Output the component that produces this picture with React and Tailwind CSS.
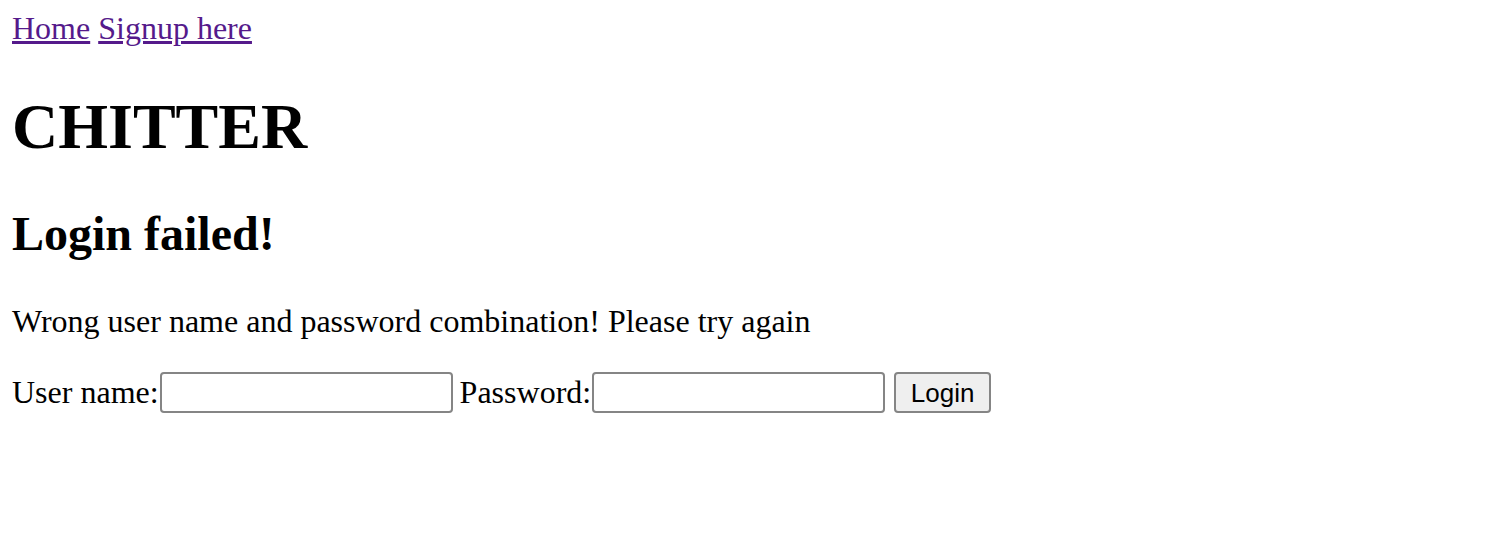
import React, { useState } from "react";

function App() {
  const [user, setUser] = useState("");
  const [password, setPassword] = useState("");

  return (
    <div className="mx-3 mt-[10px] font-['Liberation_Serif',serif] text-[32px] leading-[1.15] text-black">
      <div>
        <a href="#" className="text-[#551a8b] underline">
          Home
        </a>{" "}
        <a href="#" className="text-[#551a8b] underline">
          Signup here
        </a>
      </div>

      <h1 className="my-[43px] text-[64px] font-bold leading-[1.15]">CHITTER</h1>

      <h2 className="mt-[43px] mb-[41px] text-[48px] font-bold leading-[1.15]">Login failed!</h2>

      <p className="my-8">Wrong user name and password combination! Please try again</p>

      <form
        className="mt-[33px] mb-8 flex items-center"
        onSubmit={(e) => e.preventDefault()}
      >
        <label htmlFor="user">User name:</label>
        <input
          id="user"
          type="text"
          value={user}
          onChange={(e) => setUser(e.target.value)}
          className="ml-px h-[41px] w-[293px] rounded-[4px] border-2 border-[#858585] bg-white px-1 text-[26px] outline-none"
        />
        <label htmlFor="password" className="ml-[7px]">
          Password:
        </label>
        <input
          id="password"
          type="password"
          value={password}
          onChange={(e) => setPassword(e.target.value)}
          className="ml-px h-[41px] w-[293px] rounded-[4px] border-2 border-[#858585] bg-white px-1 text-[26px] outline-none"
        />
        <button
          type="submit"
          className="ml-[9px] h-[41px] w-[97px] rounded-[4px] border-2 border-[#858585] bg-[#efefef] font-['Liberation_Sans',Arial,sans-serif] text-[26px] leading-none text-black"
        >
          Login
        </button>
      </form>
    </div>
  );
}

export default App;
